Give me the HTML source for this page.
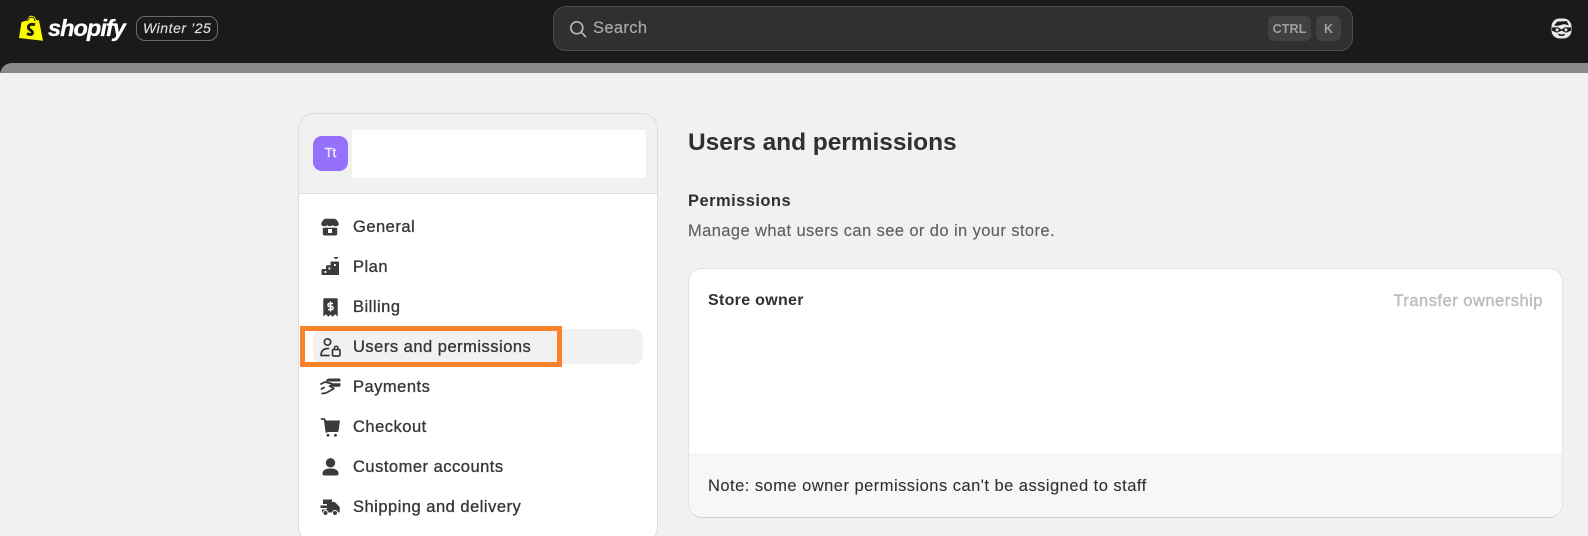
<!DOCTYPE html>
<html><head><meta charset="utf-8"><style>
html,body{margin:0;padding:0;width:1588px;height:536px;overflow:hidden;background:#1a1a1a}
*{box-sizing:border-box}
body{position:relative;font-family:"Liberation Sans",sans-serif;color:#303030}
.a{position:absolute}
.t{position:absolute;white-space:nowrap;line-height:20px;height:20px}
.m{-webkit-text-stroke:.45px currentColor}
.nav{left:353px;font-size:16.5px;letter-spacing:.5px;color:#383838;-webkit-text-stroke:.35px #383838}
svg{position:absolute;overflow:visible}
</style></head><body>
<div class="a" style="left:0;top:63px;width:1588px;height:12px;background:#8a8a8a;border-top-left-radius:12px"></div>
<div class="a" style="left:0;top:73px;width:1588px;height:463px;background:#f1f1f1"></div>

<svg style="left:19px;top:15px" width="25" height="27" viewBox="0 0 25 27"><path d="M2.500 7 8 5.500C9 2 11 .5 13 .7 15.500 1 16.800 3 17.300 5L20 5.400 24 25.800 0 23Z" fill="#fbfb00"/><path d="M8.500 6C9.500 3 11 2 13 2.200 15 2.500 15.800 4 16 6" fill="none" stroke="#1a1a1a" stroke-width=".9"/><path d="M16 9.800C13 8.700 9.800 9.300 9.300 12 8.900 15.300 14 15 13.500 18 13 20 10 19.700 8 18.500" fill="none" stroke="#1a1a1a" stroke-width="2.900"/></svg>
<div class="t" style="left:48px;top:16px;height:24px;line-height:24px;font-size:23.500px;font-weight:700;font-style:italic;color:#fff;letter-spacing:-.95px;-webkit-text-stroke:.3px #fff">shopify</div>
<div class="a" style="left:136px;top:16px;width:82px;height:25px;border:1px solid #6b6b6b;border-radius:9px"></div>
<div class="t" style="left:143px;top:18px;font-size:14px;font-style:italic;color:#dcdcdc;letter-spacing:.55px;-webkit-text-stroke:.2px #dcdcdc">Winter ’25</div>

<div class="a" style="left:553px;top:6px;width:800px;height:45px;background:#303030;border:1px solid #4d4d4d;border-radius:13px"></div>
<svg style="left:569px;top:20px" width="18" height="18" viewBox="0 0 18 18"><circle cx="7.800" cy="7.800" r="6" fill="none" stroke="#b5b5b5" stroke-width="1.700"/><path d="M12.200 12.200 16.500 16.500" stroke="#b5b5b5" stroke-width="1.700" stroke-linecap="round"/></svg>
<div class="t" style="left:593px;top:18px;font-size:16.500px;color:#a9a9a9;letter-spacing:.35px;-webkit-text-stroke:.2px #a9a9a9">Search</div>
<div class="a" style="left:1268px;top:16px;width:43px;height:25px;background:#414141;border-radius:6px"></div>
<div class="t" style="left:1268px;top:19px;width:43px;text-align:center;font-size:12.500px;font-weight:700;color:#a0a0a0;letter-spacing:.1px">CTRL</div>
<div class="a" style="left:1316px;top:16px;width:25px;height:25px;background:#414141;border-radius:6px"></div>
<div class="t" style="left:1316px;top:19px;width:25px;text-align:center;font-size:12.500px;font-weight:700;color:#a0a0a0">K</div>
<svg style="left:1551px;top:18px" width="21" height="21" viewBox="0 0 20 20"><rect x=".5" y=".5" width="19" height="19" rx="7.500" fill="#e8e8e8"/><path d="M3 7 6 3.500 15 3 17 7 12.500 5.800 6 7.500Z" fill="#1a1a1a"/><path d="M1 9 6.500 8.800 10 11 13.500 8.800 19 9V12L14.500 14 10 12 5.500 14 1 12Z" fill="#1a1a1a"/><circle cx="5.800" cy="11.300" r="1.400" fill="#e8e8e8"/><circle cx="14.200" cy="11.300" r="1.400" fill="#e8e8e8"/><path d="M7 15.500Q10 17.500 13 15.500" stroke="#1a1a1a" stroke-width="1.500" fill="none"/></svg>

<!-- sidebar -->
<div class="a" style="left:298px;top:113px;width:360px;height:430px;background:#fff;border:1px solid #dcdcdc;border-radius:16px;overflow:hidden">
  <div class="a" style="left:0;top:0;width:100%;height:80px;background:#f1f1f1;border-bottom:1px solid #dfdfdf"></div>
</div>
<div class="a" style="left:313px;top:136px;width:35px;height:35px;background:#9470fb;border-radius:9px"></div>
<div class="t m" style="left:313px;top:143px;width:35px;text-align:center;font-size:13px;color:#f1ecff">Tt</div>
<div class="a" style="left:352px;top:130px;width:294px;height:48px;background:#fff"></div>

<div class="a" style="left:313px;top:329px;width:330px;height:35px;background:#f1f1f1;border-radius:9px"></div>
<div class="a" style="left:300px;top:326px;width:262px;height:41px;border:5px solid #f9822b"></div>

<div class="t nav" style="top:216.500px">General</div>
<div class="t nav" style="top:256.500px">Plan</div>
<div class="t nav" style="top:296.500px">Billing</div>
<div class="t nav" style="top:336.500px">Users and permissions</div>
<div class="t nav" style="top:376.500px">Payments</div>
<div class="t nav" style="top:416.500px">Checkout</div>
<div class="t nav" style="top:456.500px">Customer accounts</div>
<div class="t nav" style="top:496.500px">Shipping and delivery</div>

<!-- General -->
<svg style="left:321px;top:218px" width="18" height="18" viewBox="0 0 18 18"><path d="M4 .8H14Q17 2.500 17.800 6 17.500 8.300 14.500 8.300 12.500 8.300 12 7 11 8.300 9 8.300 7 8.300 6 7 5.500 8.300 3.500 8.300 .5 8.300 .2 6 1 2.500 4 .8Z" fill="#3b3b3b"/><path d="M1.800 9.700Q3.500 10 5.500 9.500 9 10.200 12.500 9.500 14.500 10 16.200 9.700V15.500Q16.200 17.500 14.500 17.500H3.500Q1.800 17.500 1.800 15.500Z" fill="#3b3b3b"/><rect x="7" y="11" width="4" height="4" fill="#fff"/></svg>
<!-- Plan -->
<svg style="left:321px;top:257px" width="19" height="19" viewBox="0 0 19 19"><path d="M12.500 0H17.500L15 2.500Z" fill="#3b3b3b"/><path d="M12.500 4.500H17.500Q18 4.500 18 5V18H1.500Q.5 18 .5 17V13.500Q.5 12 2 12H5V9.500Q5 8.300 6.200 8.300H9.500V5.500Q9.500 4.500 10.500 4.500Z" fill="#3b3b3b"/><rect x="3.500" y="14" width="1.800" height="2" fill="#fff"/><rect x="7.500" y="10.500" width="1.800" height="2" fill="#fff"/><rect x="13" y="7" width="1.800" height="2" fill="#fff"/></svg>
<!-- Billing -->
<svg style="left:323px;top:298px" width="15" height="19" viewBox="0 0 15 19"><path d="M1.500 .3H13.500Q14.700 .3 14.700 1.500V18.500L12 16.300 9.800 18.800 7.500 16.800 5.200 18.800 3 16.300 .3 18.500V1.500Q.3 .3 1.500 .3Z" fill="#3b3b3b"/><path d="M10 5.500H6.500Q5 5.500 5 7 5 8.500 6.500 8.500H8.500Q10 8.500 10 10 10 11.500 8.500 11.500H5M7.500 3.500V13.500" fill="none" stroke="#fff" stroke-width="1.500"/></svg>
<!-- Users -->
<svg style="left:320px;top:338px" width="21" height="19" viewBox="0 0 21 19"><circle cx="7.500" cy="4" r="3.200" fill="none" stroke="#3b3b3b" stroke-width="1.700"/><path d="M1 17.500H9M1 17.500C1 13 3.500 10.500 8.500 10.500" fill="none" stroke="#3b3b3b" stroke-width="1.700" stroke-linecap="round"/><rect x="12.500" y="11.500" width="7.500" height="6.500" rx="1.200" fill="none" stroke="#3b3b3b" stroke-width="1.700"/><path d="M14.500 11.500V10Q14.500 8.300 16.200 8.300 18 8.300 18 10V11.500" fill="none" stroke="#3b3b3b" stroke-width="1.500"/></svg>
<!-- Payments -->
<svg style="left:320px;top:378px" width="21" height="17" viewBox="0 0 21 17"><path d="M6.500 1.800Q7.500 .5 9 .5H19Q20.500 .5 20.500 2V3.500H6ZM8.500 5.300H20.500V7Q20.500 8.800 19 8.800H14Z" fill="#3b3b3b"/><path d="M1 6 5 4 11.500 5.500 13 7.800 9.500 8 14 10.500 7 14.500Q5 15.500 2 15.500M4 9.500 1.500 11" fill="none" stroke="#3b3b3b" stroke-width="1.800" stroke-linecap="round" stroke-linejoin="round"/></svg>
<!-- Checkout -->
<svg style="left:321px;top:418px" width="19" height="19" viewBox="0 0 19 19"><path d="M.5 1H2.500Q3.500 1 3.800 2L5.500 14" fill="none" stroke="#3b3b3b" stroke-width="1.800" stroke-linecap="round"/><path d="M4 2.500H19L17.500 13Q17.300 14 16.300 14H5.500Z" fill="#3b3b3b"/><circle cx="7" cy="17.300" r="1.400" fill="#3b3b3b"/><circle cx="14.500" cy="17.300" r="1.400" fill="#3b3b3b"/></svg>
<!-- Customer -->
<svg style="left:322px;top:458px" width="17" height="18" viewBox="0 0 17 18"><circle cx="8.500" cy="4.800" r="4.700" fill="#3b3b3b"/><path d="M.5 15.500C.5 12 4 10.500 8.500 10.500S16.500 12 16.500 15.500Q16.500 17.500 14.500 17.500H2.500Q.5 17.500.5 15.500Z" fill="#3b3b3b"/></svg>
<!-- Shipping -->
<svg style="left:320px;top:499px" width="20" height="17" viewBox="0 0 20 17"><path d="M3 .5H12V3H14.800L19.700 8V12.500Q19.700 13.500 18.700 13.500H2V10.500H7V9H.5V6.500H7V5H3Z" fill="#3b3b3b"/><circle cx="5.500" cy="14" r="2.500" fill="#3b3b3b" stroke="#fff" stroke-width="1"/><circle cx="15" cy="14" r="2.500" fill="#3b3b3b" stroke="#fff" stroke-width="1"/></svg>

<!-- main -->
<div class="t" style="left:688px;top:130px;height:26px;line-height:26px;font-size:24.500px;font-weight:700;color:#303030;letter-spacing:-.05px">Users and permissions</div>
<div class="t" style="left:688px;top:191px;font-size:16.500px;font-weight:700;color:#303030;letter-spacing:.45px">Permissions</div>
<div class="t" style="left:688px;top:221px;font-size:16.500px;color:#616161;letter-spacing:.4px;-webkit-text-stroke:.15px #616161">Manage what users can see or do in your store.</div>

<div class="a" style="left:688px;top:268px;width:875px;height:250px;background:#fff;border:1px solid #e3e3e3;border-bottom:1px solid #cfcfcf;border-radius:14px;overflow:hidden">
  <div class="a" style="left:0;top:184px;width:100%;height:66px;background:#f7f7f7"></div>
</div>
<div class="t" style="left:708px;top:291px;font-size:16px;font-weight:700;color:#303030;letter-spacing:.3px">Store owner</div>
<div class="t m" style="right:45px;top:291px;font-size:16.500px;color:#bdbdbd;letter-spacing:.5px">Transfer ownership</div>
<div class="t" style="left:708px;top:476px;font-size:16.500px;color:#303030;letter-spacing:.47px;-webkit-text-stroke:.1px #303030">Note: some owner permissions can't be assigned to staff</div>
</body></html>
